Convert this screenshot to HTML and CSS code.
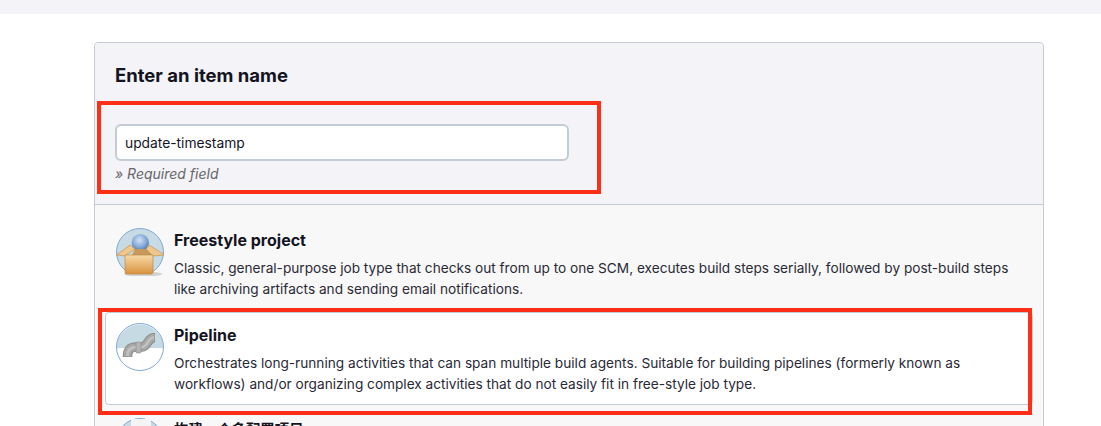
FILE: index.html
```html
<!DOCTYPE html>
<html lang="zh-CN">
<head>
    <meta charset="UTF-8">
    <title>New Item</title>
    <link rel="stylesheet" href="styles.css">
</head>
<body>
    <div class="top-band"></div>

    <div class="panel">
        <!-- Name -->
        <div class="name-section">
            <h2>Enter an item name</h2>
            <input class="name-input" type="text" value="update-timestamp">
            <div class="hint">» Required field</div>
            <div class="mark mark-name"></div>
        </div>

        <!-- Types -->
        <div class="type-list">
            <div class="type-item">
                <svg class="type-icon" viewBox="0 0 48 48">
                    <defs>
                        <radialGradient id="ball" cx="0.45" cy="0.35" r="0.7">
                            <stop offset="0" stop-color="#d5e3f3"/>
                            <stop offset="0.6" stop-color="#7fa6d6"/>
                            <stop offset="1" stop-color="#3f6cab"/>
                        </radialGradient>
                        <linearGradient id="box" x1="0" y1="0" x2="0" y2="1">
                            <stop offset="0" stop-color="#f7d9a6"/>
                            <stop offset="1" stop-color="#d8933f"/>
                        </linearGradient>
                    </defs>
                    <circle cx="24" cy="24" r="23.5" fill="#c8dbe5" stroke="#7fa9d6"/>
                    <ellipse cx="27" cy="46" rx="19" ry="2.5" fill="#d2d2d2"/>
                    <circle cx="24.3" cy="14.7" r="8.7" fill="url(#ball)"/>
                    <path d="M16 27 L19 21 H32 L36 27 Z" fill="#c79a5c"/>
                    <path d="M0.5 27 L14 17 L19 21 L9 28 Z" fill="#eec78c" stroke="#c08a42" stroke-width="0.6"/>
                    <path d="M49 27 L33 17 L30 21 L37 28 Z" fill="#eec78c" stroke="#c08a42" stroke-width="0.6"/>
                    <path d="M9 27 H37 V44 Q37 46 35 46 H11 Q9 46 9 44 Z" fill="url(#box)" stroke="#b98138" stroke-width="0.6"/>
                </svg>
                <div class="type-text">
                    <div class="type-name">Freestyle project</div>
                    <div class="type-desc">Classic, general-purpose job type that checks out from up to one SCM, executes build steps serially, followed by post-build steps like archiving artifacts and sending email notifications.</div>
                </div>
            </div>

            <div class="type-item active">
                <svg class="type-icon" viewBox="0 0 48 48">
                    <path d="M0.5 25 A23.5 23.5 0 0 1 47.5 25 Z" fill="#c6dae4"/>
                    <circle cx="24" cy="24" r="23.5" fill="none" stroke="#7fa9d6"/>
                    <path d="M11.5 34 C11.5 27 14 24 20 24 H26 C32 24 31 14.5 39 14.5" fill="none" stroke="#8c8c8c" stroke-width="9.5"/>
                    <path d="M11.5 33.5 C11.5 27 14 24 20 24 H26 C32 24 31 14.5 38.5 14.5" fill="none" stroke="#a8a8a8" stroke-width="7.5"/>
                    <path d="M11.5 33 C11.5 27 14 24 20 24 H26 C32 24 31 14.5 38 14.5" fill="none" stroke="#c2c2c2" stroke-width="2.5"/>
                    <rect x="20" y="19" width="5" height="11" rx="1" fill="#b4b4b4" stroke="#7d7d7d" stroke-width="0.5"/>
                </svg>
                <div class="type-text">
                    <div class="type-name">Pipeline</div>
                    <div class="type-desc">Orchestrates long-running activities that can span multiple build agents. Suitable for building pipelines (formerly known as workflows) and/or organizing complex activities that do not easily fit in free-style job type.</div>
                </div>
            </div>

            <div class="type-item">
                <svg class="type-icon" viewBox="0 0 48 48">
                    <circle cx="24" cy="24" r="23.5" fill="#c8dbe5" stroke="#7fa9d6"/>
                    <rect x="15" y="1" width="20" height="30" fill="#f4f4f4"/>
                </svg>
                <div class="type-text">
                    <div class="type-name type-name-cjk">构建一个多配置项目</div>
                </div>
            </div>

            <div class="mark mark-pipeline"></div>
        </div>
    </div>
</body>
</html>
```

FILE: styles.css
```css
html, body {
    margin: 0;
    height: 426px;
    overflow: hidden;
}
body {
    background-color: #fff;
    color: #14141f;
    font-family: Inter, "Noto Sans CJK SC", sans-serif;
    font-size: 14px;
}
.top-band {
    height: 14px;
    background-color: #f4f4f8;
}
.panel {
    position: relative;
    width: 948px;
    margin: 28px 0 0 94px;
    border: 1px solid #c3ccd4;
    border-radius: 4px;
}
.name-section {
    height: 162px;
    box-sizing: border-box;
    padding: 20px 20px 0;
    background-color: #f3f3f8;
    border-bottom: 1px solid #c3ccd4;
    border-radius: 4px 4px 0 0;
}
h2 {
    margin: 0 0 37px;
    font-size: 18.5px;
    line-height: 24px;
    font-weight: 700;
}
.name-input {
    display: block;
    width: 454px;
    height: 37px;
    box-sizing: border-box;
    padding: 0 8px;
    background-color: #fff;
    border: 2px solid #c3ccd4;
    border-radius: 6px;
    color: #14141f;
    font-family: inherit;
    font-size: 13.8px;
}
.hint {
    margin-top: 4px;
    color: #666;
    font-size: 14px;
    font-style: italic;
    line-height: 18px;
}
.type-list {
    position: relative;
    height: 300px;
    padding: 12px 10px 0;
    background-color: #f8f8f8;
}
.type-item {
    display: flex;
    height: 93px;
    box-sizing: border-box;
    margin-bottom: 2px;
    padding: 10px 10px 0;
    border: 1px solid transparent;
    border-radius: 4px;
}
.type-item.active {
    background-color: #fff;
    border-color: #c3ccd4;
}
.type-icon {
    flex: none;
    width: 48px;
    height: 48px;
    margin-right: 10px;
}
.type-text {
    padding-top: 1px;
}
.type-name {
    margin-bottom: 7px;
    font-size: 16px;
    line-height: 22px;
    font-weight: 700;
}
.type-name-cjk {
    font-size: 14.4px;
}
.type-desc {
    color: #2a2a35;
    font-size: 13.65px;
    line-height: 21px;
}
/* red annotation boxes drawn on top of the screenshot */
.mark {
    position: absolute;
    box-sizing: border-box;
    border: 4px solid #ff2f17;
}
.mark-name {
    left: 2px;
    top: 58px;
    width: 504px;
    height: 93px;
}
.mark-pipeline {
    left: 3px;
    top: 103px;
    width: 934px;
    height: 107px;
}
```
